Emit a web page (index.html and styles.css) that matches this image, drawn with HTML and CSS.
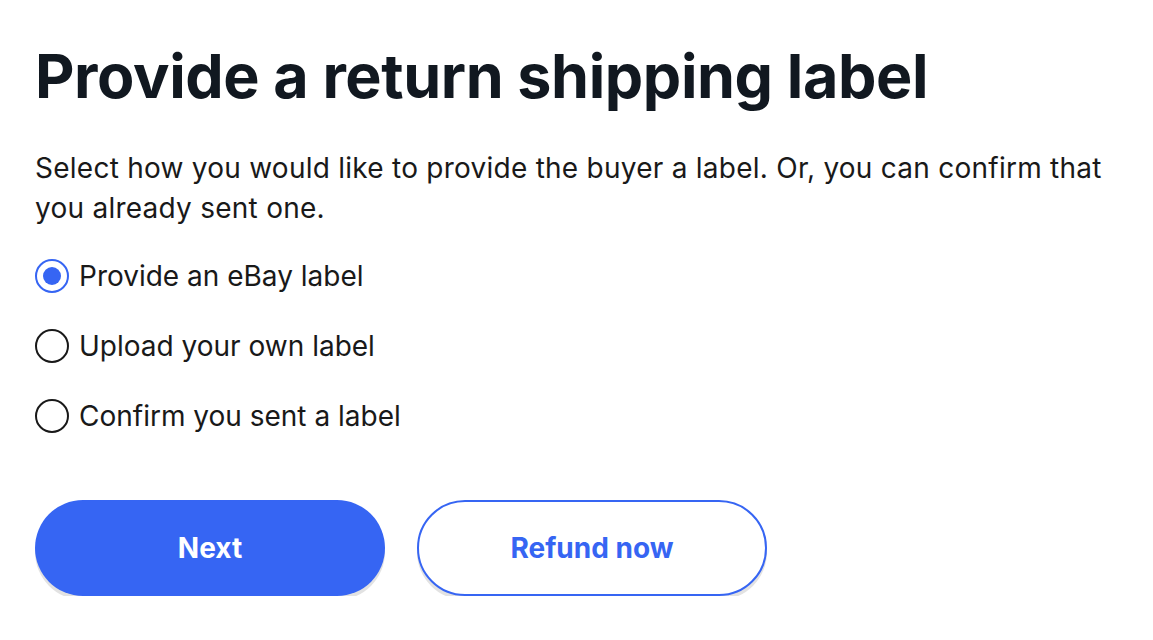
FILE: index.html
```html
<!DOCTYPE html>
<html lang="en">
<head>
<meta charset="utf-8">
<title>Provide a return shipping label</title>
<link rel="stylesheet" href="styles.css">
</head>
<body>
<main class="page">
  <h1 class="title">Provide a return shipping label</h1>
  <p class="intro">Select how you would like to provide the buyer a label. Or, you can confirm that you already sent one.</p>
  <div class="options">
    <label class="option">
      <span class="radio radio--checked"><span class="radio-dot"></span></span>
      <span class="option-text">Provide an eBay label</span>
    </label>
    <label class="option">
      <span class="radio"></span>
      <span class="option-text">Upload your own label</span>
    </label>
    <label class="option">
      <span class="radio"></span>
      <span class="option-text">Confirm you sent a label</span>
    </label>
  </div>
  <div class="actions">
    <button class="btn btn--primary" type="button">Next</button>
    <button class="btn btn--secondary" type="button">Refund now</button>
  </div>
</main>
</body>
</html>
```
FILE: styles.css
```css
html, body {
  margin: 0;
  padding: 0;
  background: #ffffff;
}

body {
  font-family: Inter, "Liberation Sans", Arial, sans-serif;
  color: #191919;
}

.page {
  padding: 38px 35px 0 35px;
}

.title {
  margin: 0;
  font-size: 61px;
  line-height: 76px;
  font-weight: 700;
  color: #111820;
  letter-spacing: -0.4px;
}

.intro {
  margin: 34px 0 0 0;
  font-size: 28px;
  line-height: 40px;
  letter-spacing: 0.25px;
  max-width: 1075px;
}

.options {
  margin-top: 13px;
  display: flex;
  flex-direction: column;
}

.option {
  display: flex;
  align-items: center;
  gap: 10px;
  height: 70px;
  font-size: 28px;
}

.radio {
  width: 34px;
  height: 34px;
  box-sizing: border-box;
  border: 2.5px solid #191919;
  border-radius: 50%;
  display: flex;
  align-items: center;
  justify-content: center;
  flex: none;
}

.radio--checked {
  border-color: #3665f3;
}

.radio-dot {
  width: 18px;
  height: 18px;
  border-radius: 50%;
  background: #3665f3;
}

.actions {
  margin-top: 49px;
  display: flex;
  gap: 32px;
}

.btn {
  width: 350px;
  height: 96px;
  border-radius: 48px;
  font-family: inherit;
  font-size: 28px;
  font-weight: 700;
  cursor: pointer;
  box-shadow: 0 4px 0 #e2e2e2;
}

.btn--primary {
  background: #3665f3;
  color: #ffffff;
  border: none;
}

.btn--secondary {
  background: #ffffff;
  color: #3665f3;
  border: 2px solid #3665f3;
}
```
